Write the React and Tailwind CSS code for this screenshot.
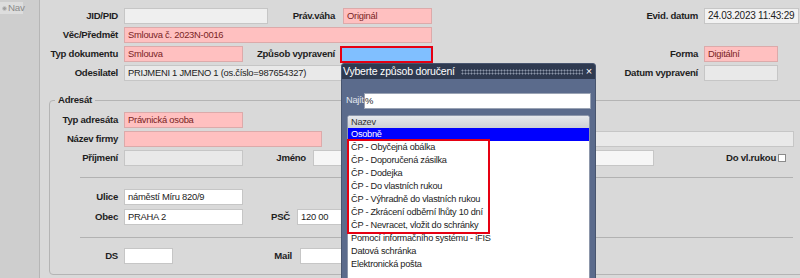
import React from "react";

const box = "h-4 shrink-0 border px-[3px] leading-[14px] whitespace-nowrap overflow-hidden";
const pink = `${box} bg-[#ffc0c0] border-[#dcaaaa] text-[#7a2424]`;
const gray = `${box} bg-[#e9e9e9] border-[#c6c6c6] text-[#222]`;
const white = `${box} bg-white border-[#c6c6c6] text-[#222]`;

function Label({ className = "", children }) {
  return (
    <span className={`shrink-0 text-right font-bold text-[9.6px] text-[#1e1e1e] leading-4 whitespace-nowrap ${className}`}>
      {children}
    </span>
  );
}

const ITEMS_CP = [
  "ČP - Obyčejná obálka",
  "ČP - Doporučená zásilka",
  "ČP - Dodejka",
  "ČP - Do vlastních rukou",
  "ČP - Výhradně do vlastních rukou",
  "ČP - Zkrácení odběrní lhůty 10 dní",
  "ČP - Nevracet, vložit do schránky",
];

const ITEMS_REST = [
  "Pomocí informačního systému - iFIS",
  "Datová schránka",
  "Elektronická pošta",
];

function Popup() {
  return (
    <div className="absolute left-[341px] top-[63px] w-[255px] h-[240px] bg-[#5b6b8c] border border-[#48556f] rounded-t-[3px] overflow-hidden">
      {/* title */}
      <div className="h-[15px] bg-[#2f3a50] flex items-center pl-[1px] pr-[3px] text-white text-[10.5px] tracking-[-0.2px]">
        <span className="whitespace-nowrap">Vyberte způsob doručení</span>
        <div className="flex-1 h-[6px] ml-[6px] mr-[3px] bg-[radial-gradient(circle,#8e97aa_0.8px,transparent_1.2px)] bg-[length:3px_3px]" />
        <span className="text-[11px] leading-none">×</span>
      </div>

      <div className="pt-[14px] text-[9.2px]">
        <div className="flex items-center pl-[4px]">
          <span className="w-[18px] text-[#e2e6ee] whitespace-nowrap">Najít</span>
          <div className="h-4 w-[227px] bg-white border border-[#9aa3b4] leading-[14px] text-[#222] text-[9.4px]">%</div>
        </div>

        <div className="mt-[6px] ml-[5px] w-[243px] h-[200px] bg-white border border-[#8c96aa] rounded-t-[3px] text-[#222]">
          <div className="h-[12px] leading-[12px] pl-[3px] bg-gradient-to-b from-[#e6e8ec] to-[#cdd0d6] text-[#333] rounded-t-[2px]">
            Nazev
          </div>
          <div className="h-[13px] leading-[13px] pl-[3px] bg-[#0000ff] text-white">Osobně</div>
          <div className="ml-px w-[139px] outline-2 outline-solid outline-[#e60012]">
            {ITEMS_CP.map((t) => (
              <div key={t} className="h-[13px] leading-[13px] pl-[2px] whitespace-nowrap">{t}</div>
            ))}
          </div>
          {ITEMS_REST.map((t) => (
            <div key={t} className="h-[13px] leading-[13px] pl-[3px] whitespace-nowrap">{t}</div>
          ))}
        </div>
      </div>
    </div>
  );
}

export default function App() {
  return (
    <div className="relative w-[800px] h-[278px] overflow-hidden flex bg-[#d9d9d9] text-[9.4px] tracking-[-0.25px] [font-family:'Liberation_Sans',Arial,sans-serif]">
      {/* sidebar */}
      <aside className="w-[40px] shrink-0 bg-[#cecece] border-r border-[#b6b6b6]">
        <div className="mt-[2px] w-[23px] h-[12px] bg-[#dddddd] flex items-center text-[#8a8a8a] text-[9.8px]">
          <span className="ml-[2px] mr-[1px] w-[5px] h-[5px] shrink-0 rounded-full bg-[#a0a0a0] border border-[#c8c8c8]" />
          <span className="leading-none">Nav</span>
        </div>
      </aside>

      <main className="w-[780px] shrink-0 pt-[8px]">
        {/* header rows */}
        <div className="flex flex-col gap-[3px]">
          <div className="flex items-center">
            <Label className="w-[78px]">JID/PID</Label>
            <div className={`${gray} ml-[6px] w-[144px] bg-[#efefef]`} />
            <Label className="w-[67px]">Práv.váha</Label>
            <div className={`${pink} ml-[8px] w-[89px]`}>Originál</div>
            <Label className="w-[266px]">Evid. datum</Label>
            <div className={`${gray} ml-[6px] w-[95px] bg-[#f2f2f2] text-[10px]`}>24.03.2023 11:43:29</div>
          </div>
          <div className="flex items-center">
            <Label className="w-[78px]">Věc/Předmět</Label>
            <div className={`${pink} ml-[6px] w-[308px]`}>Smlouva č. 2023N-0016</div>
          </div>
          <div className="flex items-center h-4">
            <Label className="w-[78px]">Typ dokumentu</Label>
            <div className={`${pink} ml-[6px] w-[119px]`}>Smlouva</div>
            <Label className="w-[92px]">Způsob vypravení</Label>
            <div className="ml-[5px] w-[93px] h-[17px] shrink-0 bg-[#80bfff] border-2 border-[#e60012]" />
            <Label className="w-[265px]">Forma</Label>
            <div className={`${pink} ml-[6px] w-[74px]`}>Digitální</div>
          </div>
          <div className="flex items-center">
            <Label className="w-[78px]">Odesilatel</Label>
            <div className={`${gray} ml-[6px] w-[400px]`}>PRIJMENI 1 JMENO 1 (os.číslo=987654327)</div>
            <Label className="w-[174px]">Datum vypravení</Label>
            <div className={`${gray} ml-[6px] w-[74px]`} />
          </div>
        </div>

        {/* Adresát */}
        <fieldset className="mt-[13px] ml-[9px] w-[763px] border border-[#b4b4b4] rounded-[4px] pb-[10px]">
          <legend className="ml-[5px] px-[3px] font-bold text-[9.6px] leading-[12px] text-[#1e1e1e]">Adresát</legend>
          <div className="pt-[6px] flex flex-col">
            <div className="flex items-center">
              <Label className="w-[68px]">Typ adresáta</Label>
              <div className={`${pink} ml-[6px] w-[119px]`}>Právnická osoba</div>
            </div>
            <div className="flex items-center mt-[3px]">
              <Label className="w-[68px]">Název firmy</Label>
              <div className={`${pink} ml-[6px] w-[198px]`} />
              <div className={`${gray} ml-[148px] w-[324px]`} />
            </div>
            <div className="flex items-center mt-[3px]">
              <Label className="w-[68px]">Příjmení</Label>
              <div className={`${gray} ml-[6px] w-[119px]`} />
              <Label className="w-[63px]">Jméno</Label>
              <div className={`${gray} ml-[7px] w-[341px] bg-[#f6f6f6]`} />
              <Label className="ml-[72px]">Do vl.rukou</Label>
              <span className="ml-[2px] w-[8px] h-[8px] shrink-0 bg-white border border-[#8a8a8a]" />
            </div>

            <div className="mt-[11px] ml-[30px] w-[713px] h-px bg-[#b2b2b2]" />

            <div className="flex items-center mt-[11px]">
              <Label className="w-[68px]">Ulice</Label>
              <div className={`${white} ml-[6px] w-[119px]`}>náměstí Míru 820/9</div>
            </div>
            <div className="flex items-center mt-[4px]">
              <Label className="w-[68px]">Obec</Label>
              <div className={`${white} ml-[6px] w-[119px]`}>PRAHA 2</div>
              <Label className="w-[47px]">PSČ</Label>
              <div className={`${white} ml-[7px] w-[120px]`}>120 00</div>
            </div>

            <div className="mt-[12px] ml-[30px] w-[713px] h-px bg-[#b2b2b2]" />

            <div className="flex items-center mt-[10px]">
              <Label className="w-[68px]">DS</Label>
              <div className={`${white} ml-[6px] w-[49px]`} />
              <Label className="w-[119px]">Mail</Label>
              <div className={`${white} ml-[8px] w-[130px]`} />
            </div>
          </div>
        </fieldset>
      </main>

      <Popup />
    </div>
  );
}
